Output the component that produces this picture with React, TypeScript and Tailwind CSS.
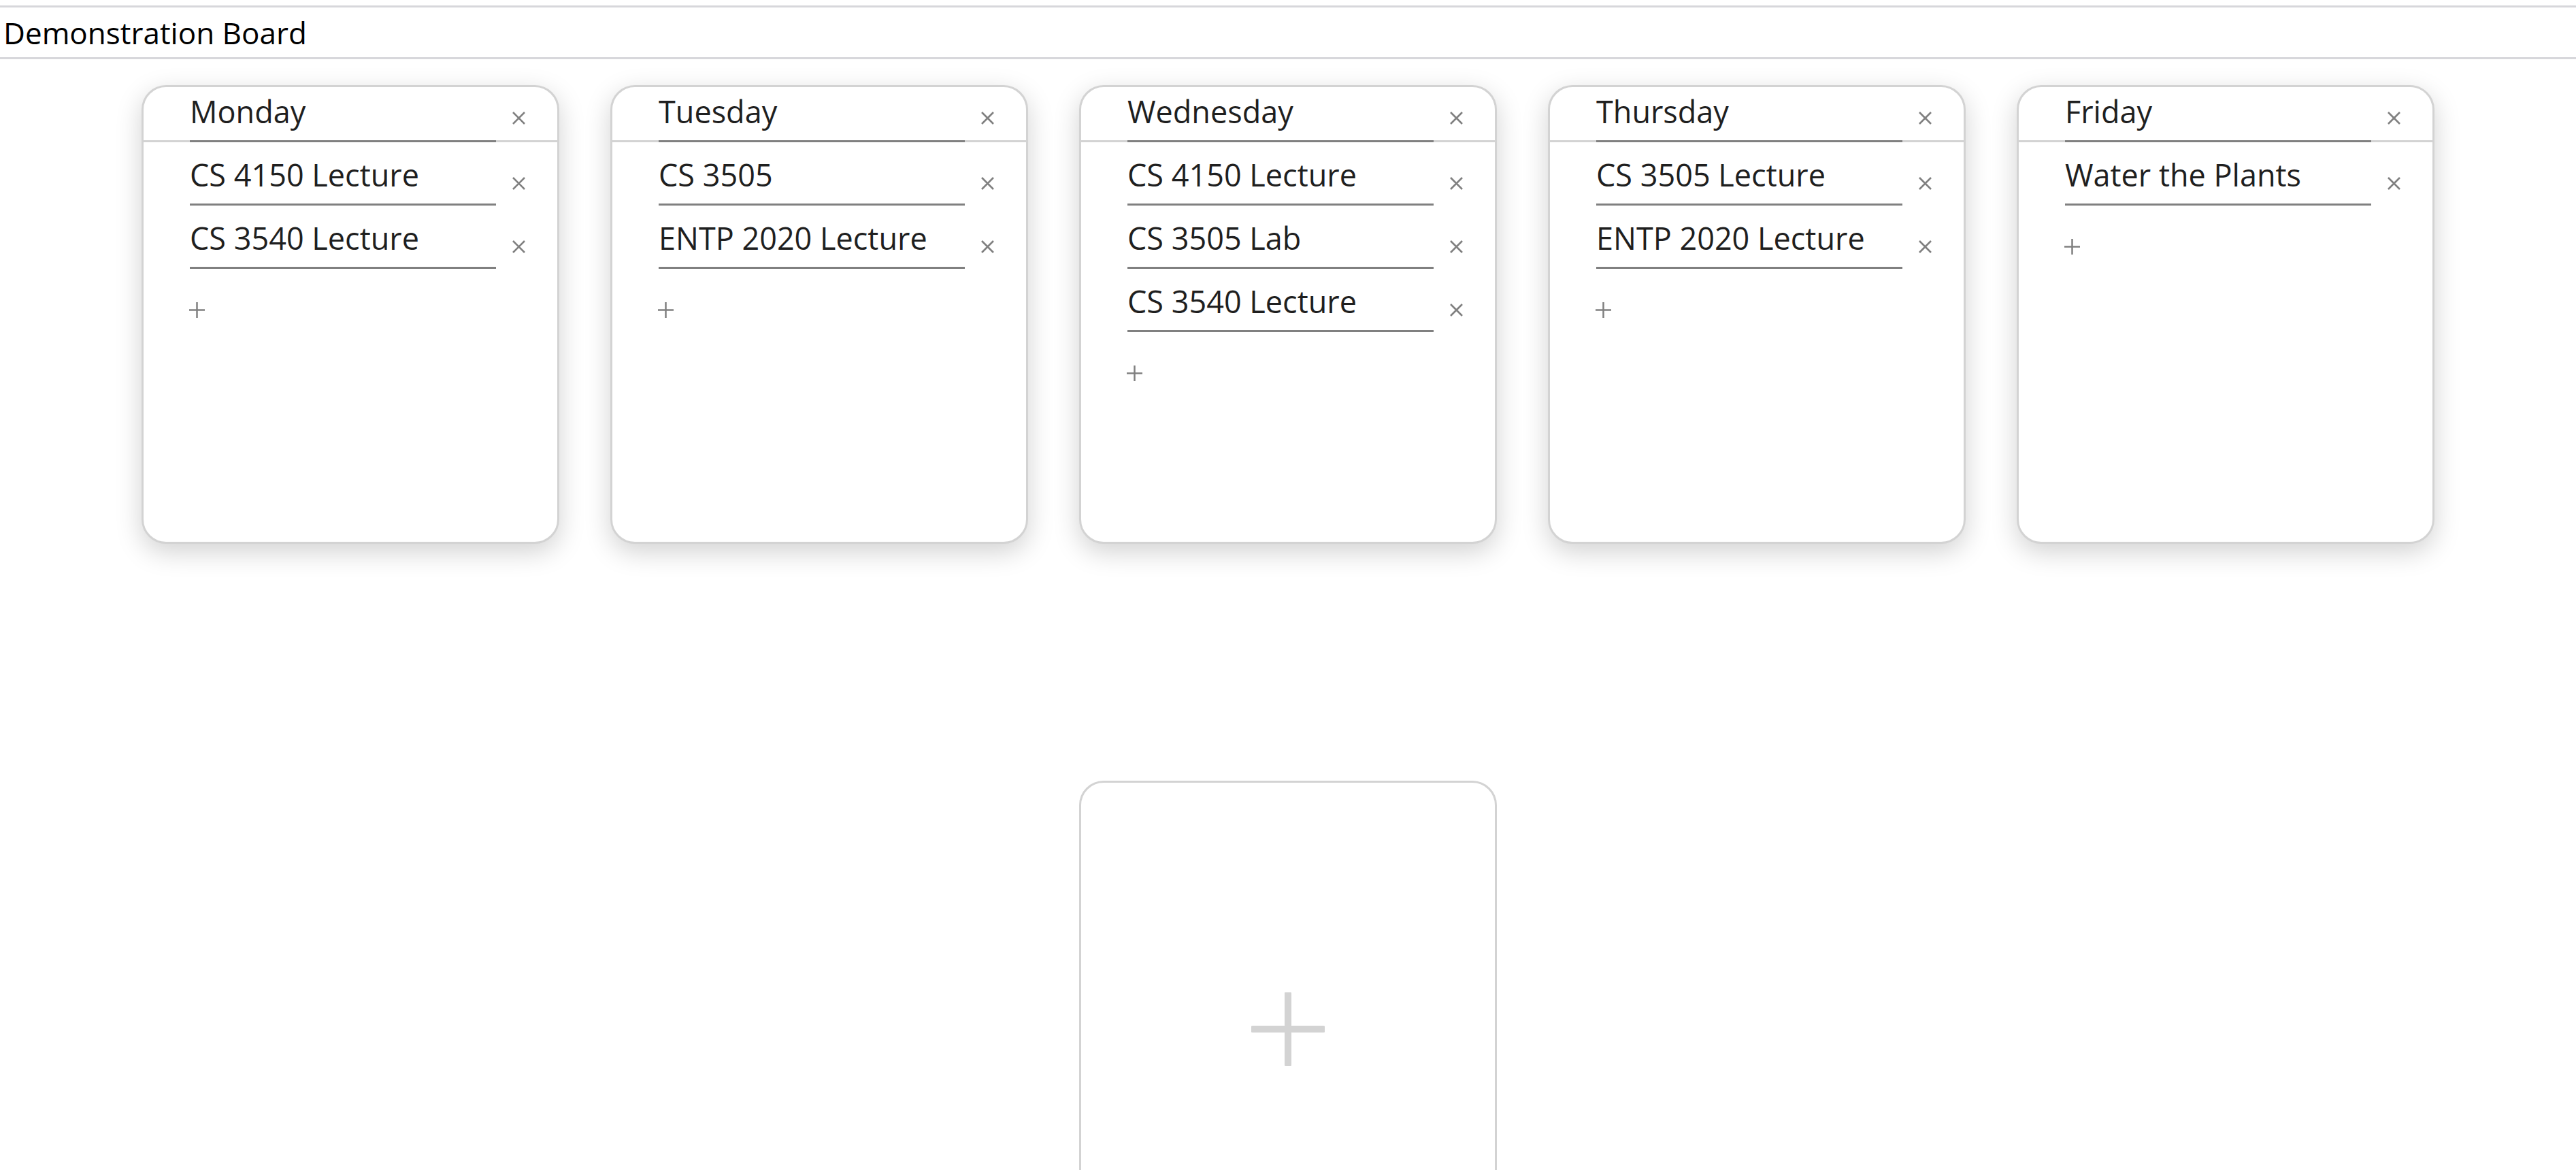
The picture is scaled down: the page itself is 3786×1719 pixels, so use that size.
import React from 'react';

interface DayProps {
  title: string;
  items: string[];
}

// board data
const days: DayProps[] = [
  { title: "Monday", items: ["CS 4150 Lecture", "CS 3540 Lecture"] },
  { title: "Tuesday", items: ["CS 3505", "ENTP 2020 Lecture"] },
  { title: "Wednesday", items: ["CS 4150 Lecture", "CS 3505 Lab", "CS 3540 Lecture"] },
  { title: "Thursday", items: ["CS 3505 Lecture", "ENTP 2020 Lecture"] },
  { title: "Friday", items: ["Water the Plants"] },
];

const CloseIcon = () => (
  <svg width="21" height="21" viewBox="0 0 21 21" className="block">
    <path d="M2 2L19 19M19 2L2 19" stroke="#808080" strokeWidth="2.6" />
  </svg>
);

const DayCard: React.FC<DayProps> = ({ title, items }) => {
  return (
    <div className="w-[614px] h-[674px] shrink-0 rounded-[36px] border-[3px] border-[#d3d3d3] bg-white shadow-[0_12px_38px_rgba(0,0,0,0.18)] overflow-hidden text-[45px] text-[#1f1f1f]">
      <div className="flex items-end h-[81px] border-b-[3px] border-[#d3d3d3] pl-[68px]">
        <div className="-mb-[3px] h-[81px] w-[450px] shrink-0 border-b-[3px] border-[#808080] pb-[7px] flex items-center whitespace-nowrap">
          {title}
        </div>
        <span className="ml-[23px] self-center mt-[12px]">
          <CloseIcon />
        </span>
      </div>
      {items.map((item, index) => (
        <div key={index} className="flex pl-[68px]">
          <div className="h-[93px] w-[450px] shrink-0 border-b-[3px] border-[#808080] pt-[6px] flex items-center whitespace-nowrap">
            {item}
          </div>
          <span className="ml-[23px] self-center mt-[27px]">
            <CloseIcon />
          </span>
        </div>
      ))}
      <div className="pl-[67px] mt-[49px]">
        <svg width="23" height="23" viewBox="0 0 23 23" className="block">
          <path d="M11.5 0V23M0 11.5H23" stroke="#808080" strokeWidth="2.5" />
        </svg>
      </div>
    </div>
  );
};

const App = () => {
  return (
    <div className="min-h-screen bg-white font-['Open_Sans',sans-serif]">
      <div className="mt-[8px] h-[79px] border-y-[3px] border-[#d7d7db] flex items-center pl-[5px] text-[44px] text-black">
        Demonstration Board
      </div>

      <div className="flex justify-center gap-[75px] mt-[38px]">
        {days.map((day) => (
          <DayCard key={day.title} {...day} />
        ))}
      </div>

      <div className="flex justify-center mt-[348px]">
        <div className="w-[614px] h-[674px] rounded-[36px] border-[3px] border-[#d3d3d3] bg-white flex items-center justify-center pt-[56px]">
          <svg width="108" height="108" viewBox="0 0 108 108" className="block">
            <path d="M54 2V106M2 54H106" stroke="#d3d3d3" strokeWidth="10" strokeLinecap="round" />
          </svg>
        </div>
      </div>
    </div>
  );
};

export default App;
